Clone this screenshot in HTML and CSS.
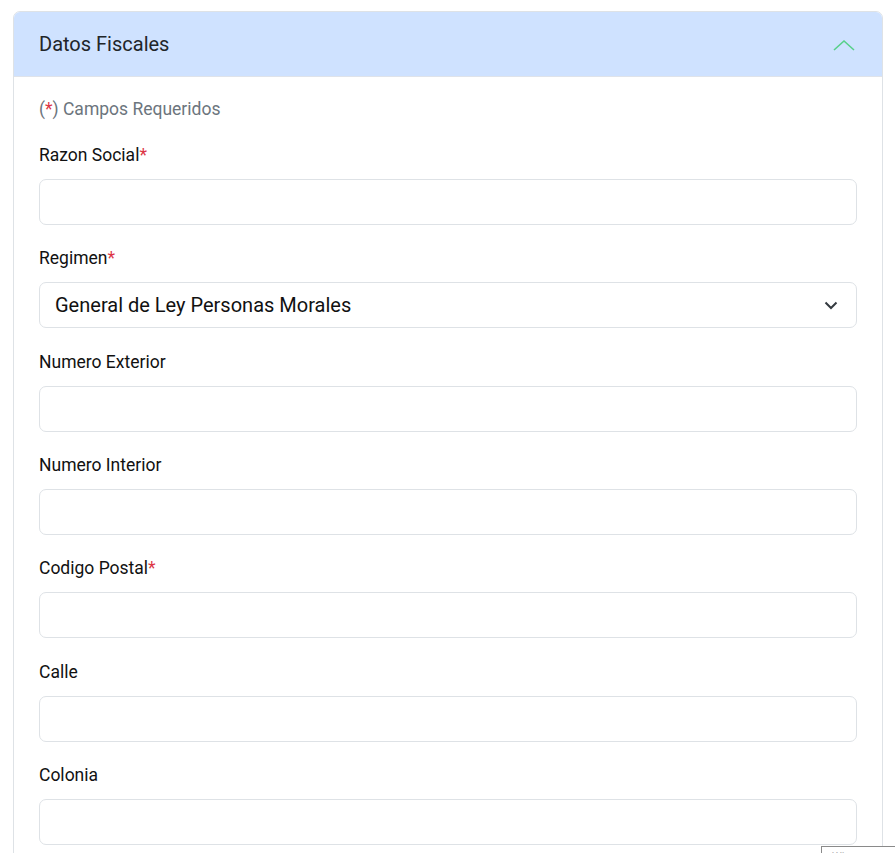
FILE: index.html
```html
<!DOCTYPE html>
<html lang="es">
<head>
<meta charset="utf-8">
<title>Datos Fiscales</title>
<link rel="stylesheet" href="styles.css">
</head>
<body>
<div class="card">
  <div class="card-header">
    <span class="card-title">Datos Fiscales</span>
    <svg class="chev-up" width="22" height="12" viewBox="0 0 22 12" fill="none"><path d="M1 11 L11 2 L21 11" stroke="#58d08a" stroke-width="1.6"/></svg>
  </div>
  <div class="card-body">
    <p class="required-note">(<span class="req">*</span>) Campos Requeridos</p>
    <div class="field">
      <label class="label">Razon Social<span class="req">*</span></label>
      <div class="input"></div>
    </div>
    <div class="field">
      <label class="label">Regimen<span class="req">*</span></label>
      <div class="input select">
        <span class="select-text">General de Ley Personas Morales</span>
        <svg class="chev-down" width="14" height="9" viewBox="0 0 14 9" fill="none"><path d="M1.5 1.5 L7 7 L12.5 1.5" stroke="#343a40" stroke-width="2"/></svg>
      </div>
    </div>
    <div class="field">
      <label class="label">Numero Exterior</label>
      <div class="input"></div>
    </div>
    <div class="field">
      <label class="label">Numero Interior</label>
      <div class="input"></div>
    </div>
    <div class="field">
      <label class="label">Codigo Postal<span class="req">*</span></label>
      <div class="input"></div>
    </div>
    <div class="field">
      <label class="label">Calle</label>
      <div class="input"></div>
    </div>
    <div class="field">
      <label class="label">Colonia</label>
      <div class="input"></div>
    </div>
  </div>
</div>
<div class="corner-tip">Wi...</div>
</body>
</html>
```
FILE: styles.css
```css
html, body {
  margin: 0;
  padding: 0;
  background: #ffffff;
  overflow: hidden;
}
body {
  font-family: Roboto, "Liberation Sans", sans-serif;
  color: #212529;
  height: 853px;
  position: relative;
}
.card {
  margin: 11px 0 0 13px;
  width: 868px;
  border: 1px solid #dee2e6;
  border-radius: 7px;
  background: #fff;
}
.card-header {
  height: 64px;
  background: #cfe2ff;
  border-bottom: 1px solid #dfe3ea;
  border-radius: 6px 6px 0 0;
  display: flex;
  align-items: center;
  justify-content: space-between;
  padding: 0 25px 0 25px;
}
.card-title {
  font-size: 20px;
  color: #212529;
}
.chev-up {
  margin-right: 2px;
  margin-top: 2px;
}
.card-body {
  padding: 20px 25px 0 25px;
}
.required-note {
  margin: 0 0 22px 0;
  font-size: 17.5px;
  line-height: 24px;
  color: #6c757d;
}
.req {
  color: #dc3545;
}
.field {
  margin-bottom: 21.33px;
}
.label {
  display: block;
  font-size: 17.5px;
  line-height: 24px;
  margin-bottom: 12px;
  color: #111;
}
.input {
  height: 44px;
  border: 1px solid #dee2e6;
  border-radius: 7px;
  box-sizing: content-box;
}
.select {
  display: flex;
  align-items: center;
  justify-content: space-between;
  padding: 0 18px 0 15px;
}
.select-text {
  font-size: 20px;
  color: #111;
}
.corner-tip {
  position: absolute;
  left: 821px;
  top: 846px;
  width: 80px;
  height: 20px;
  border-top: 1px solid #8a8a8a;
  border-left: 1px solid #8a8a8a;
  background: #fff;
  font-size: 11px;
  color: #b0b0b0;
  padding: 3px 0 0 10px;
}
```
